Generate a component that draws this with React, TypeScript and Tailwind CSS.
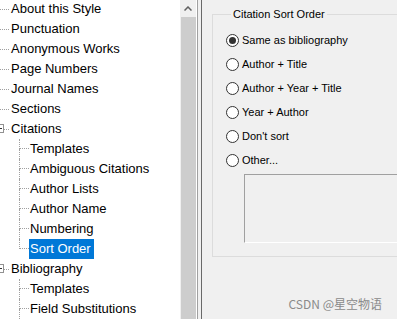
import React from 'react';

type Node = { label: string; children?: string[]; open?: boolean };

const TREE: Node[] = [
    { label: 'About this Style' },
    { label: 'Punctuation' },
    { label: 'Anonymous Works' },
    { label: 'Page Numbers' },
    { label: 'Journal Names' },
    { label: 'Sections' },
    {
        label: 'Citations',
        open: true,
        children: ['Templates', 'Ambiguous Citations', 'Author Lists', 'Author Name', 'Numbering', 'Sort Order'],
    },
    // list continues below the fold, so its last row keeps the full connector
    { label: 'Bibliography', open: true, children: ['Templates', 'Field Substitutions'] },
];

const SELECTED = 'Citations/Sort Order';

const OPTIONS = ['Same as bibliography', 'Author + Title', 'Author + Year + Title', 'Year + Author', "Don't sort", 'Other...'];

function TopRow({ node }: { node: Node }) {
    return (
        <div className="relative flex h-5 items-center">
            <div className="w-[9px] border-t border-dotted border-[#a0a0a0]" />
            {node.children && (
                // expander box, partly clipped on the left edge
                <div className="absolute left-[-5px] top-[5px] flex h-[9px] w-[9px] items-center justify-center border border-[#919191] bg-white">
                    <div className="h-px w-[5px] bg-[#333]" />
                </div>
            )}
            <span className="ml-[2px] whitespace-nowrap">{node.label}</span>
        </div>
    );
}

function ChildRow({ label, last, selected }: { label: string; last: boolean; selected: boolean }) {
    return (
        <div className="flex h-5">
            <div className="w-[19px] shrink-0" />
            <div className="flex w-[10px] shrink-0 flex-col">
                <div className="h-[10px] border-b border-l border-dotted border-[#a0a0a0]" />
                {!last && <div className="h-[10px] border-l border-dotted border-[#a0a0a0]" />}
            </div>
            <span
                className={
                    'flex h-5 items-center whitespace-nowrap pl-px pr-[3px] ' +
                    (selected ? 'bg-[#0078d7] text-white' : '')
                }
            >
                {label}
            </span>
        </div>
    );
}

function Radio({ label, checked }: { label: string; checked?: boolean }) {
    return (
        <div className="flex h-6 items-center">
            <div className="flex h-[13px] w-[13px] shrink-0 items-center justify-center rounded-full border border-[#333] bg-white">
                {checked && <div className="h-[7px] w-[7px] rounded-full bg-[#333]" />}
            </div>
            <span className="ml-[3px] whitespace-pre">{label}</span>
        </div>
    );
}

export default function App() {
    return (
        <div className="relative flex h-[319px] w-[397px] overflow-hidden bg-[#f0f0f0] text-black">
            {/* Left: tree view */}
            <div className="w-[180px] shrink-0 overflow-hidden bg-white font-['Liberation_Sans',Arial,sans-serif] text-[13px]">
                <div className="-mt-px">
                    {TREE.map((node) => (
                        <div key={node.label}>
                            <TopRow node={node} />
                            {node.open &&
                                node.children?.map((c, i) => (
                                    <ChildRow
                                        key={c}
                                        label={c}
                                        last={node.label === 'Citations' && i === node.children!.length - 1}
                                        selected={`${node.label}/${c}` === SELECTED}
                                    />
                                ))}
                        </div>
                    ))}
                </div>
            </div>

            {/* Scrollbar */}
            <div className="flex w-[16px] shrink-0 flex-col bg-[#f0f0f0]">
                <div className="flex h-[17px] items-center justify-center">
                    <svg width="8" height="5" viewBox="0 0 8 5">
                        <path d="M0.5 4.5 L4 1 L7.5 4.5" fill="none" stroke="#606060" strokeWidth="1.5" />
                    </svg>
                </div>
                <div className="ml-px flex-1 bg-[#cdcdcd]" />
            </div>
            <div className="w-px shrink-0 bg-white" />
            <div className="w-px shrink-0 bg-[#a0a0a0]" />
            <div className="w-[3px] shrink-0 bg-[#f0f0f0]" />
            <div className="w-px shrink-0 bg-[#696969]" />

            {/* Right: settings panel */}
            <div className="flex-1 overflow-hidden font-['Liberation_Sans',Arial,sans-serif] text-[11px]">
                <fieldset className="ml-[10px] mt-[7px] w-[220px] border border-[#dcdcdc] pb-[13px] pl-[13px]">
                    <legend className="ml-[5px] px-[2px] leading-[14px]">Citation Sort Order</legend>
                    <div className="pt-[7px]">
                        {OPTIONS.map((o, i) => (
                            <Radio key={o} label={o} checked={i === 0} />
                        ))}
                    </div>
                    <div className="ml-[18px] mt-[2px] h-[69px] border-b border-l border-t border-b-white border-l-[#a0a0a0] border-t-[#a0a0a0]" />
                </fieldset>
            </div>

            <div className="absolute bottom-[6px] right-[15px] font-['Noto_Sans_CJK_SC',sans-serif] text-[12px] text-[#8a8a8a]">
                CSDN @星空物语
            </div>
        </div>
    );
}
